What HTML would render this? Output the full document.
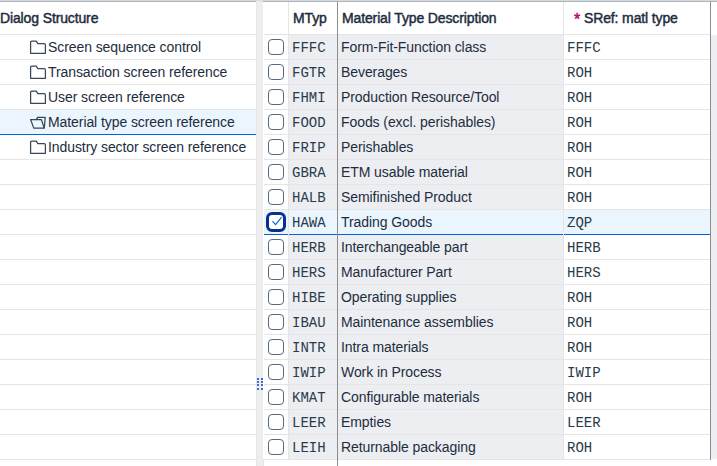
<!DOCTYPE html>
<html><head><meta charset="utf-8"><style>
*{margin:0;padding:0;box-sizing:border-box}
html,body{width:717px;height:466px;overflow:hidden;background:#fff}
body{position:relative;font-family:"Liberation Sans",sans-serif;font-size:14px;color:#1d2d3e}
.abs{position:absolute}
.topl{position:absolute;left:0;top:0;width:717px;height:1px;background:#d9d9d9}
.top2{position:absolute;left:0;top:1px;width:717px;height:1px;background:#a9b5c1}
.hl{position:absolute;height:1px;background:#e5e5e5}
.vl{position:absolute;width:1px}
.txt{position:absolute;white-space:nowrap;line-height:25px;height:25px}
.b{font-weight:normal;-webkit-text-stroke-width:0.45px;letter-spacing:-0.13px}
.r{letter-spacing:-0.08px}
.m{font-family:"Liberation Mono",monospace;letter-spacing:0px;color:#2a3a4b}
.cb{position:absolute;width:16px;height:16px;border:1px solid #556b82;border-radius:4px;background:#fff}
.fi{position:absolute}
</style></head><body>

<div class="topl"></div><div class="top2"></div>
<div class="txt b" style="left:0px;top:6px">Dialog Structure</div>
<div class="hl" style="left:0;top:34px;width:256px"></div>
<div class="hl" style="left:0;top:59px;width:256px"></div>
<div class="abs" style="left:29px;top:40px;width:18px;height:16px"><svg class="fi" width="18" height="16" viewBox="0 0 18 16"><path d="M1.6,2.3 Q1.6,1.1 2.8,1.1 H7.2 L8.9,3.7 H15.2 Q16.4,3.7 16.4,4.9 V13.3 H1.6 Z" fill="none" stroke="#37475a" stroke-width="1.25" stroke-linejoin="round"/></svg></div>
<div class="txt r" style="left:48px;top:35px">Screen sequence control</div>
<div class="hl" style="left:0;top:84px;width:256px"></div>
<div class="abs" style="left:29px;top:65px;width:18px;height:16px"><svg class="fi" width="18" height="16" viewBox="0 0 18 16"><path d="M1.6,2.3 Q1.6,1.1 2.8,1.1 H7.2 L8.9,3.7 H15.2 Q16.4,3.7 16.4,4.9 V13.3 H1.6 Z" fill="none" stroke="#37475a" stroke-width="1.25" stroke-linejoin="round"/></svg></div>
<div class="txt r" style="left:48px;top:60px">Transaction screen reference</div>
<div class="hl" style="left:0;top:109px;width:256px"></div>
<div class="abs" style="left:29px;top:90px;width:18px;height:16px"><svg class="fi" width="18" height="16" viewBox="0 0 18 16"><path d="M1.6,2.3 Q1.6,1.1 2.8,1.1 H7.2 L8.9,3.7 H15.2 Q16.4,3.7 16.4,4.9 V13.3 H1.6 Z" fill="none" stroke="#37475a" stroke-width="1.25" stroke-linejoin="round"/></svg></div>
<div class="txt r" style="left:48px;top:85px">User screen reference</div>
<div class="abs" style="left:0;top:110px;width:256px;height:24px;background:#eaf5fe"></div>
<div class="hl" style="left:0;top:134px;width:256px;background:#0064d9"></div>
<div class="abs" style="left:29px;top:115px;width:18px;height:16px"><svg class="fi" width="18" height="16" viewBox="0 0 18 16"><path d="M7.5,4.6 L8.6,2.4 H16.2 L15.3,13.1" fill="none" stroke="#37475a" stroke-width="1.25" stroke-linejoin="round"/><path d="M1.6,4.5 H12.3 L15.3,13.1 H4.8 Z" fill="none" stroke="#37475a" stroke-width="1.25" stroke-linejoin="round"/></svg></div>
<div class="txt r" style="left:48px;top:110px">Material type screen reference</div>
<div class="hl" style="left:0;top:159px;width:256px"></div>
<div class="abs" style="left:29px;top:140px;width:18px;height:16px"><svg class="fi" width="18" height="16" viewBox="0 0 18 16"><path d="M1.6,2.3 Q1.6,1.1 2.8,1.1 H7.2 L8.9,3.7 H15.2 Q16.4,3.7 16.4,4.9 V13.3 H1.6 Z" fill="none" stroke="#37475a" stroke-width="1.25" stroke-linejoin="round"/></svg></div>
<div class="txt r" style="left:48px;top:135px">Industry sector screen reference</div>
<div class="hl" style="left:0;top:184px;width:256px"></div>
<div class="hl" style="left:0;top:209px;width:256px"></div>
<div class="hl" style="left:0;top:234px;width:256px"></div>
<div class="hl" style="left:0;top:259px;width:256px"></div>
<div class="hl" style="left:0;top:284px;width:256px"></div>
<div class="hl" style="left:0;top:309px;width:256px"></div>
<div class="hl" style="left:0;top:334px;width:256px"></div>
<div class="hl" style="left:0;top:359px;width:256px"></div>
<div class="hl" style="left:0;top:384px;width:256px"></div>
<div class="hl" style="left:0;top:409px;width:256px"></div>
<div class="hl" style="left:0;top:434px;width:256px"></div>
<div class="hl" style="left:0;top:459px;width:256px"></div>
<div class="abs" style="left:256px;top:0;width:7px;height:466px;background:#eeeeee"></div>
<div class="abs" style="left:256px;top:0;width:1px;height:466px;background:#e6e6e6"></div>
<div class="abs" style="left:256px;top:0;width:7px;height:1px;background:#dedede"></div>
<div class="abs" style="left:256px;top:1px;width:7px;height:1px;background:#e6e6e6"></div>
<div class="abs" style="left:257px;top:378px;width:2px;height:2px;background:#0040d0;border-radius:1px"></div>
<div class="abs" style="left:261px;top:378px;width:2px;height:2px;background:#0040d0;border-radius:1px"></div>
<div class="abs" style="left:257px;top:381px;width:2px;height:2px;background:#0040d0;border-radius:1px"></div>
<div class="abs" style="left:261px;top:381px;width:2px;height:2px;background:#0040d0;border-radius:1px"></div>
<div class="abs" style="left:257px;top:384px;width:2px;height:2px;background:#0040d0;border-radius:1px"></div>
<div class="abs" style="left:261px;top:384px;width:2px;height:2px;background:#0040d0;border-radius:1px"></div>
<div class="abs" style="left:257px;top:388px;width:2px;height:2px;background:#0040d0;border-radius:1px"></div>
<div class="abs" style="left:261px;top:388px;width:2px;height:2px;background:#0040d0;border-radius:1px"></div>
<div class="txt b" style="left:293px;top:6px">MTyp</div>
<div class="txt b" style="left:342px;top:6px">Material Type Description</div>
<div class="txt b" style="left:574px;top:7px;color:#ba066c;font-size:16px">*</div>
<div class="txt b" style="left:584px;top:6px">SRef: matl type</div>
<div class="hl" style="left:264px;top:34px;width:447px"></div>
<div class="abs" style="left:289px;top:35px;width:274px;height:24px;background:#eceef1"></div>
<div class="hl" style="left:264px;top:59px;width:447px;"></div>
<div class="cb" style="left:268px;top:39px"></div>
<div class="txt m" style="left:292px;top:36px">FFFC</div>
<div class="txt r" style="left:341px;top:35px">Form-Fit-Function class</div>
<div class="txt m" style="left:567px;top:36px">FFFC</div>
<div class="abs" style="left:289px;top:60px;width:274px;height:24px;background:#eceef1"></div>
<div class="hl" style="left:264px;top:84px;width:447px;"></div>
<div class="cb" style="left:268px;top:64px"></div>
<div class="txt m" style="left:292px;top:61px">FGTR</div>
<div class="txt r" style="left:341px;top:60px">Beverages</div>
<div class="txt m" style="left:567px;top:61px">ROH</div>
<div class="abs" style="left:289px;top:85px;width:274px;height:24px;background:#eceef1"></div>
<div class="hl" style="left:264px;top:109px;width:447px;"></div>
<div class="cb" style="left:268px;top:89px"></div>
<div class="txt m" style="left:292px;top:86px">FHMI</div>
<div class="txt r" style="left:341px;top:85px">Production Resource/Tool</div>
<div class="txt m" style="left:567px;top:86px">ROH</div>
<div class="abs" style="left:289px;top:110px;width:274px;height:24px;background:#eceef1"></div>
<div class="hl" style="left:264px;top:134px;width:447px;"></div>
<div class="cb" style="left:268px;top:114px"></div>
<div class="txt m" style="left:292px;top:111px">FOOD</div>
<div class="txt r" style="left:341px;top:110px">Foods (excl. perishables)</div>
<div class="txt m" style="left:567px;top:111px">ROH</div>
<div class="abs" style="left:289px;top:135px;width:274px;height:24px;background:#eceef1"></div>
<div class="hl" style="left:264px;top:159px;width:447px;"></div>
<div class="cb" style="left:268px;top:139px"></div>
<div class="txt m" style="left:292px;top:136px">FRIP</div>
<div class="txt r" style="left:341px;top:135px">Perishables</div>
<div class="txt m" style="left:567px;top:136px">ROH</div>
<div class="abs" style="left:289px;top:160px;width:274px;height:24px;background:#eceef1"></div>
<div class="hl" style="left:264px;top:184px;width:447px;"></div>
<div class="cb" style="left:268px;top:164px"></div>
<div class="txt m" style="left:292px;top:161px">GBRA</div>
<div class="txt r" style="left:341px;top:160px">ETM usable material</div>
<div class="txt m" style="left:567px;top:161px">ROH</div>
<div class="abs" style="left:289px;top:185px;width:274px;height:24px;background:#eceef1"></div>
<div class="hl" style="left:264px;top:209px;width:447px;"></div>
<div class="cb" style="left:268px;top:189px"></div>
<div class="txt m" style="left:292px;top:186px">HALB</div>
<div class="txt r" style="left:341px;top:185px">Semifinished Product</div>
<div class="txt m" style="left:567px;top:186px">ROH</div>
<div class="abs" style="left:264px;top:210px;width:446px;height:24px;background:#eaf5fe"></div>
<div class="hl" style="left:264px;top:234px;width:447px;background:#0064d9"></div>
<div class="abs" style="left:266px;top:212px;width:20px;height:20px;border:3px solid #0a2f94;border-radius:6px;background:#fff"></div>
<svg class="abs" style="left:264px;top:210px" width="24" height="24" viewBox="0 0 24 24"><path d="M8.5,11.2 L11.6,14.6 L17.6,7.1" fill="none" stroke="#0064d9" stroke-width="1.1"/></svg>
<div class="txt m" style="left:292px;top:211px">HAWA</div>
<div class="txt r" style="left:341px;top:210px">Trading Goods</div>
<div class="txt m" style="left:567px;top:211px">ZQP</div>
<div class="abs" style="left:289px;top:235px;width:274px;height:24px;background:#eceef1"></div>
<div class="hl" style="left:264px;top:259px;width:447px;"></div>
<div class="cb" style="left:268px;top:239px"></div>
<div class="txt m" style="left:292px;top:236px">HERB</div>
<div class="txt r" style="left:341px;top:235px">Interchangeable part</div>
<div class="txt m" style="left:567px;top:236px">HERB</div>
<div class="abs" style="left:289px;top:260px;width:274px;height:24px;background:#eceef1"></div>
<div class="hl" style="left:264px;top:284px;width:447px;"></div>
<div class="cb" style="left:268px;top:264px"></div>
<div class="txt m" style="left:292px;top:261px">HERS</div>
<div class="txt r" style="left:341px;top:260px">Manufacturer Part</div>
<div class="txt m" style="left:567px;top:261px">HERS</div>
<div class="abs" style="left:289px;top:285px;width:274px;height:24px;background:#eceef1"></div>
<div class="hl" style="left:264px;top:309px;width:447px;"></div>
<div class="cb" style="left:268px;top:289px"></div>
<div class="txt m" style="left:292px;top:286px">HIBE</div>
<div class="txt r" style="left:341px;top:285px">Operating supplies</div>
<div class="txt m" style="left:567px;top:286px">ROH</div>
<div class="abs" style="left:289px;top:310px;width:274px;height:24px;background:#eceef1"></div>
<div class="hl" style="left:264px;top:334px;width:447px;"></div>
<div class="cb" style="left:268px;top:314px"></div>
<div class="txt m" style="left:292px;top:311px">IBAU</div>
<div class="txt r" style="left:341px;top:310px">Maintenance assemblies</div>
<div class="txt m" style="left:567px;top:311px">ROH</div>
<div class="abs" style="left:289px;top:335px;width:274px;height:24px;background:#eceef1"></div>
<div class="hl" style="left:264px;top:359px;width:447px;"></div>
<div class="cb" style="left:268px;top:339px"></div>
<div class="txt m" style="left:292px;top:336px">INTR</div>
<div class="txt r" style="left:341px;top:335px">Intra materials</div>
<div class="txt m" style="left:567px;top:336px">ROH</div>
<div class="abs" style="left:289px;top:360px;width:274px;height:24px;background:#eceef1"></div>
<div class="hl" style="left:264px;top:384px;width:447px;"></div>
<div class="cb" style="left:268px;top:364px"></div>
<div class="txt m" style="left:292px;top:361px">IWIP</div>
<div class="txt r" style="left:341px;top:360px">Work in Process</div>
<div class="txt m" style="left:567px;top:361px">IWIP</div>
<div class="abs" style="left:289px;top:385px;width:274px;height:24px;background:#eceef1"></div>
<div class="hl" style="left:264px;top:409px;width:447px;"></div>
<div class="cb" style="left:268px;top:389px"></div>
<div class="txt m" style="left:292px;top:386px">KMAT</div>
<div class="txt r" style="left:341px;top:385px">Configurable materials</div>
<div class="txt m" style="left:567px;top:386px">ROH</div>
<div class="abs" style="left:289px;top:410px;width:274px;height:24px;background:#eceef1"></div>
<div class="hl" style="left:264px;top:434px;width:447px;"></div>
<div class="cb" style="left:268px;top:414px"></div>
<div class="txt m" style="left:292px;top:411px">LEER</div>
<div class="txt r" style="left:341px;top:410px">Empties</div>
<div class="txt m" style="left:567px;top:411px">LEER</div>
<div class="abs" style="left:289px;top:435px;width:274px;height:24px;background:#eceef1"></div>
<div class="hl" style="left:264px;top:459px;width:447px;"></div>
<div class="cb" style="left:268px;top:439px"></div>
<div class="txt m" style="left:292px;top:436px">LEIH</div>
<div class="txt r" style="left:341px;top:435px">Returnable packaging</div>
<div class="txt m" style="left:567px;top:436px">ROH</div>
<div class="vl" style="left:288px;top:2px;height:457px;background:#e5e5e5"></div>
<div class="vl" style="left:337px;top:2px;height:464px;background:#8c8c8c"></div>
<div class="vl" style="left:563px;top:2px;height:457px;background:#e5e5e5"></div>
<div class="vl" style="left:710px;top:2px;height:458px;background:#8c8c8c"></div>
<div class="abs" style="left:711px;top:35px;width:6px;height:424px;background:#eceef1"></div>
<div class="vl" style="left:263px;top:459px;height:7px;background:#e5e5e5"></div>
</body></html>
